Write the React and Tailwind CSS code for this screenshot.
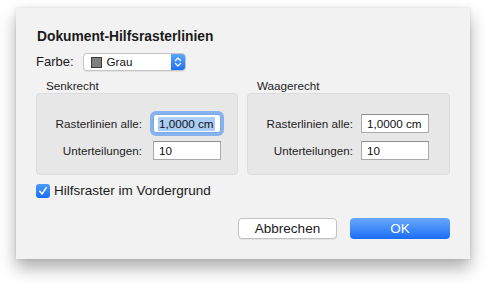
import React from "react";

function Field({ children, focused }) {
  if (focused) {
    return (
      <div className="w-[68px] h-[19px] rounded-[3px] shadow-[0_0_0_3px_#86b3f0] border border-[#7da7e0] bg-white flex items-center pl-[4px] text-[11.7px] leading-[14px] text-[#111]">
        <span className="bg-[#a9cdf7] px-[1px]">{children}</span>
      </div>
    );
  }
  return (
    <div className="w-[68px] h-[19px] border border-[#a9a9a9] border-t-[#8e8e8e] bg-white flex items-center pl-[5px] text-[11.7px] leading-[14px] text-[#111]">
      {children}
    </div>
  );
}

function Group({ title, gapClass, focusFirst }) {
  return (
    <div className="flex flex-col">
      <div className="h-[14px] pl-[10px] text-[11.7px] leading-[14px] text-[#1e1e1e]">{title}</div>
      <div className="h-[82px] rounded-[4px] bg-[#e7e7e7] border border-[#dcdcdc] pt-[20px] flex flex-col gap-[8px]">
        <div className="flex items-center">
          <div className="w-[105px] text-right text-[11.7px] leading-[14px] text-[#1e1e1e]">Rasterlinien alle:</div>
          <div className={gapClass}>
            <Field focused={focusFirst}>1,0000 cm</Field>
          </div>
        </div>
        <div className="flex items-center">
          <div className="w-[105px] text-right text-[11.7px] leading-[14px] text-[#1e1e1e]">Unterteilungen:</div>
          <div className={gapClass}>
            <Field>10</Field>
          </div>
        </div>
      </div>
    </div>
  );
}

export default function App() {
  return (
    <div className="w-[486px] h-[283px] bg-white pt-[8px] pl-[16px] font-['Liberation_Sans',Arial,sans-serif]">
      <div className="w-[454px] h-[251px] bg-[#f2f2f2] shadow-[0_9px_16px_rgba(0,0,0,0.32),0_0_3px_rgba(0,0,0,0.12)] pt-[21px] px-[20px] flex flex-col">
        <div className="h-[16px] text-[13.8px] leading-[16px] font-bold text-[#1a1a1a] pl-[1px]">
          Dokument-Hilfsrasterlinien
        </div>
        <div className="mt-[8px] h-[18px] flex items-center">
          <span className="text-[13px] leading-[16px] text-[#1a1a1a]">Farbe:</span>
          <div className="ml-[9px] w-[103px] h-[18px] rounded-[4px] bg-white border border-[#c4c4c4] shadow-[0_1px_0_rgba(0,0,0,0.06)] flex items-stretch overflow-hidden">
            <div className="flex-1 flex items-center pl-[7px]">
              <div className="w-[11px] h-[11px] bg-[#7f7f7f] border border-[#3a3a3a]" />
              <span className="ml-[5px] text-[11.6px] leading-[14px] text-[#111]">Grau</span>
            </div>
            <div className="w-[14px] bg-gradient-to-b from-[#5aa5fb] to-[#1f6ff6] flex items-center justify-center">
              <svg width="14" height="16" viewBox="0 0 14 16" fill="none">
                <path d="M4.5 6.5 L7 4 L9.5 6.5" stroke="white" strokeWidth="1.3" strokeLinecap="round" strokeLinejoin="round" />
                <path d="M4.5 9.5 L7 12 L9.5 9.5" stroke="white" strokeWidth="1.3" strokeLinecap="round" strokeLinejoin="round" />
              </svg>
            </div>
          </div>
        </div>
        <div className="mt-[8px] grid grid-cols-[202px_203px] gap-[9px]">
          <Group title="Senkrecht" gapClass="ml-[11px]" focusFirst />
          <Group title="Waagerecht" gapClass="ml-[8px]" />
        </div>
        <div className="mt-[9px] h-[14px] flex items-center">
          <div className="w-[14px] h-[14px] rounded-[3px] bg-gradient-to-b from-[#4c9bfa] to-[#1a6cf4] flex items-center justify-center">
            <svg width="14" height="14" viewBox="0 0 14 14" fill="none">
              <path d="M3.8 7.3 L6 10 L10.3 3.6" stroke="white" strokeWidth="1.5" strokeLinecap="round" strokeLinejoin="round" />
            </svg>
          </div>
          <span className="ml-[4px] text-[13.5px] leading-[16px] text-[#1a1a1a]">Hilfsraster im Vordergrund</span>
        </div>
        <div className="mt-[20px] flex justify-end gap-[13px]">
          <div className="w-[99px] h-[21px] rounded-[4px] bg-white border border-[#c2c2c2] shadow-[0_1px_0_rgba(0,0,0,0.06)] flex items-center justify-center text-[13.5px] leading-[16px] text-[#1a1a1a]">
            Abbrechen
          </div>
          <div className="w-[100px] h-[21px] rounded-[4px] bg-gradient-to-b from-[#67a8fb] to-[#196cf5] flex items-center justify-center text-[13.5px] leading-[16px] text-white">
            OK
          </div>
        </div>
      </div>
    </div>
  );
}
